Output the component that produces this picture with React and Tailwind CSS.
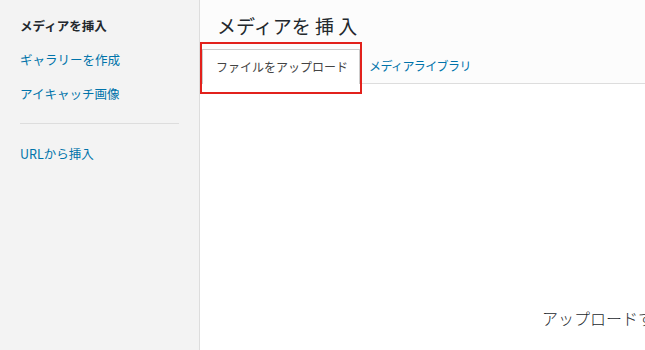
export default function App() {
  const font = { fontFamily: '"Noto Sans CJK JP", "Noto Sans", sans-serif' };
  return (
    <div className="flex w-[645px] h-[350px] overflow-hidden bg-white" style={font}>
      {/* left menu */}
      <div className="w-[200px] shrink-0 bg-[#f3f3f3] border-r border-[#dddddd] pt-[16px]">
        <div className="px-[20px] text-[12.5px] leading-[20px] font-bold text-[#23282d]">メディアを挿入</div>
        <div className="px-[20px] mt-[14px] text-[12.5px] leading-[20px] text-[#0073aa]">ギャラリーを作成</div>
        <div className="px-[20px] mt-[14px] text-[12.5px] leading-[20px] text-[#0073aa]">アイキャッチ画像</div>
        <div className="mx-[20px] mt-[19px] h-px bg-[#dddddd]"></div>
        <div className="px-[20px] mt-[20px] text-[12.5px] leading-[20px] text-[#0073aa]">URLから挿入</div>
      </div>

      {/* main */}
      <div className="relative flex-1 flex flex-col min-w-0">
        <div className="bg-[#fcfcfc] border-b border-[#dddddd] h-[84px] flex flex-col">
          <h1 className="px-[17px] pt-[11px] text-[19px] leading-[30px] text-[#23282d]">
            メディアを 挿 入
          </h1>
          <div className="flex items-end mt-auto px-[2px]">
            <div className="h-[35px] pl-[13px] pr-[11px] border border-b-0 border-[#cccccc] text-[12px] text-[#444444] flex items-center -mb-px bg-white">
              ファイルをアップロード
            </div>
            <div className="h-[35px] px-[9px] text-[12px] tracking-[-0.6px] text-[#0073aa] flex items-center">
              メディアライブラリ
            </div>
          </div>
        </div>
        <div className="flex-1 bg-white overflow-hidden">
          <div className="pl-[342px] pt-[222px] whitespace-nowrap text-[16px] font-light text-[#23282d] leading-[24px]">
            アップロードするファイルをドロップ
          </div>
        </div>
        {/* annotation frame */}
        <div className="absolute left-0 top-[42px] w-[162px] h-[52px] border-2 border-[#e2211c]"></div>
      </div>
    </div>
  );
}
